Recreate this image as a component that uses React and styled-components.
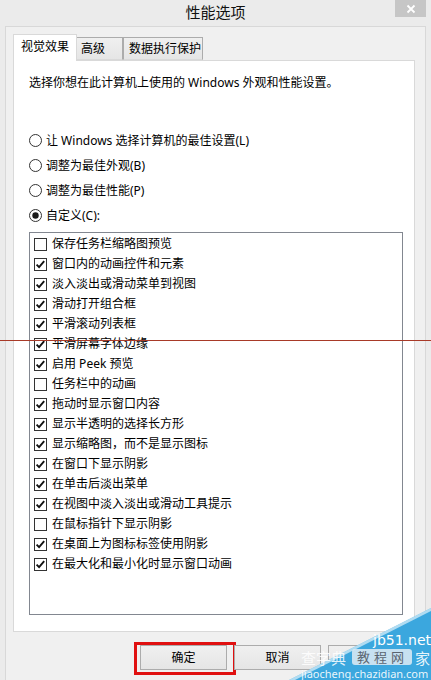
import React from "react";
import styled, { createGlobalStyle } from "styled-components";

const GlobalStyle = createGlobalStyle`
  html, body { margin: 0; padding: 0; background: #ebebeb; }
  body {
    font-family: "Noto Sans", "Noto Sans CJK SC", sans-serif;
    font-size: 12px;
    color: #000;
  }
  * { box-sizing: border-box; }
`;

const FONT = `"Noto Sans", "Noto Sans CJK SC", sans-serif`;

const Window = styled.div`
  position: relative;
  width: 431px;
  height: 680px;
  background: #ebebeb;
  display: flex;
  flex-direction: column;
  overflow: hidden;
  font-family: ${FONT};
`;

const TitleBar = styled.div`
  height: 26px;
  flex: none;
  display: grid;
  grid-template-columns: 1fr auto 1fr;
  align-items: start;
`;

const Title = styled.div`
  grid-column: 2;
  font-size: 15px;
  line-height: 24px;
  color: #111;
  font-family: "Noto Sans CJK SC", sans-serif;
`;

const CloseButton = styled.div`
  grid-column: 3;
  justify-self: end;
  width: 31px;
  height: 17px;
  margin-right: 5px;
  background: #c6c6c6;
  display: flex;
  align-items: center;
  justify-content: center;
`;

const Client = styled.div`
  flex: 1;
  margin: 0 5px;
  background: #f0f0f0;
  border: 1px solid #d8d8d8;
  border-bottom: none;
  padding: 7px 10px 0 7px;
  display: flex;
  flex-direction: column;
`;

const TabStrip = styled.div`
  display: flex;
  align-items: flex-end;
  height: 26px;
  position: relative;
  z-index: 1;
`;

const Tab = styled.div`
  width: ${(p) => p.$w}px;
  height: ${(p) => (p.$active ? 27 : 23)}px;
  margin-bottom: ${(p) => (p.$active ? -1 : 0)}px;
  padding-left: ${(p) => p.$pl}px;
  display: flex;
  align-items: center;
  font-size: 12px;
  line-height: 16px;
  color: #000;
  border: 1px solid ${(p) => (p.$active ? "#d9d9d9" : "#acacac")};
  border-bottom: ${(p) => (p.$active ? "none" : "1px solid #d9d9d9")};
  border-left-width: ${(p) => (p.$noLeft ? 0 : 1)}px;
  background: ${(p) =>
    p.$active ? "#ffffff" : "linear-gradient(#f0f0f0, #e5e5e5)"};
  padding-bottom: ${(p) => (p.$active ? 2 : 0)}px;
`;

const Panel = styled.div`
  height: 572px;
  flex: none;
  background: #fff;
  border: 1px solid #d9d9d9;
  padding: 14px 12px 0 15px;
  display: flex;
  flex-direction: column;
`;

const Description = styled.div`
  font-size: 12px;
  line-height: 16px;
`;

const RadioGroup = styled.div`
  margin-top: 37px;
  display: flex;
  flex-direction: column;
`;

const RadioRow = styled.div`
  height: 25px;
  display: flex;
  align-items: center;
  gap: 4px;
  font-size: 12px;
  line-height: 16px;
`;

const ListBox = styled.div`
  margin-top: 4px;
  height: 383px;
  width: 374px;
  border: 1px solid #828790;
  padding: 1px 4px 0;
  display: flex;
  flex-direction: column;
`;

const CheckRow = styled.div`
  height: 20px;
  display: flex;
  align-items: center;
  gap: 5px;
  font-size: 12px;
  line-height: 16px;
  white-space: nowrap;
`;

const ButtonRow = styled.div`
  margin-top: 13px;
  display: flex;
  justify-content: flex-end;
  gap: 7px;
`;

const ButtonWrap = styled.div`
  position: relative;
`;

const Button = styled.div`
  width: 87px;
  height: 25px;
  border: 1px solid #acacac;
  background: linear-gradient(#f0f0f0, #e5e5e5);
  display: flex;
  align-items: center;
  justify-content: center;
  font-size: 12px;
  line-height: 16px;
  color: ${(p) => (p.$disabled ? "#9a9a9a" : "#000")};
`;

const Highlight = styled.div`
  position: absolute;
  left: -6px;
  top: -3px;
  width: 102px;
  height: 33px;
  border: 3px solid #e01010;
  pointer-events: none;
`;

const RedLine = styled.div`
  position: absolute;
  left: 0;
  top: 340px;
  width: 431px;
  height: 1px;
  background: #a83a28;
`;

const Watermark = styled.div`
  position: absolute;
  right: 0;
  bottom: 0;
  width: 142px;
  height: 72px;
  pointer-events: none;
`;

const WmText = styled.span`
  position: absolute;
  left: ${(p) => p.$x}px;
  top: ${(p) => p.$y}px;
  font-size: ${(p) => p.$size}px;
  line-height: 1;
  color: ${(p) => p.$color || "#fff"};
  font-family: ${(p) => p.$font || FONT};
  white-space: nowrap;
  letter-spacing: ${(p) => p.$ls || 0}px;
`;

const WmBox = styled.span`
  position: absolute;
  left: 63px;
  top: 41px;
  width: 60px;
  height: 16px;
  background: rgba(235, 240, 245, 0.8);
  border-radius: 3px;
`;

function CheckBox({ checked }) {
  return (
    <svg width="13" height="13" viewBox="0 0 13 13">
      <rect x="0.5" y="0.5" width="12" height="12" fill="#fff" stroke="#333" />
      {checked && (
        <polyline
          points="2.6,6.6 5.1,9.2 10.2,3.2"
          fill="none"
          stroke="#111"
          strokeWidth="1.9"
        />
      )}
    </svg>
  );
}

function Radio({ checked }) {
  return (
    <svg width="13" height="13" viewBox="0 0 13 13">
      <circle cx="6.5" cy="6.5" r="6" fill="#fff" stroke="#333" />
      {checked && <circle cx="6.5" cy="6.5" r="3.2" fill="#1a1a1a" />}
    </svg>
  );
}

const radios = [
  { label: "让 Windows 选择计算机的最佳设置(L)", checked: false },
  { label: "调整为最佳外观(B)", checked: false },
  { label: "调整为最佳性能(P)", checked: false },
  { label: "自定义(C):", checked: true },
];

const items = [
  ["保存任务栏缩略图预览", false],
  ["窗口内的动画控件和元素", true],
  ["淡入淡出或滑动菜单到视图", true],
  ["滑动打开组合框", true],
  ["平滑滚动列表框", true],
  ["平滑屏幕字体边缘", true],
  ["启用 Peek 预览", true],
  ["任务栏中的动画", false],
  ["拖动时显示窗口内容", true],
  ["显示半透明的选择长方形", true],
  ["显示缩略图，而不是显示图标", true],
  ["在窗口下显示阴影", true],
  ["在单击后淡出菜单", true],
  ["在视图中淡入淡出或滑动工具提示", true],
  ["在鼠标指针下显示阴影", false],
  ["在桌面上为图标标签使用阴影", true],
  ["在最大化和最小化时显示窗口动画", true],
];

export default function App() {
  return (
    <>
      <GlobalStyle />
      <Window>
        <TitleBar>
          <Title>性能选项</Title>
          <CloseButton>
            <svg width="10" height="10" viewBox="0 0 10 10">
              <path d="M1.5 1.5 L8.5 8.5 M8.5 1.5 L1.5 8.5" stroke="#fff" strokeWidth="1.8" />
            </svg>
          </CloseButton>
        </TitleBar>
        <Client>
          <TabStrip>
            <Tab $active $w={64} $pl={7}>视觉效果</Tab>
            <Tab $w={46} $pl={4} $noLeft>高级</Tab>
            <Tab $w={80} $pl={5}>数据执行保护</Tab>
          </TabStrip>
          <Panel>
            <Description>选择你想在此计算机上使用的 Windows 外观和性能设置。</Description>
            <RadioGroup>
              {radios.map((r) => (
                <RadioRow key={r.label}>
                  <Radio checked={r.checked} />
                  <span>{r.label}</span>
                </RadioRow>
              ))}
            </RadioGroup>
            <ListBox>
              {items.map(([label, checked]) => (
                <CheckRow key={label}>
                  <CheckBox checked={checked} />
                  <span>{label}</span>
                </CheckRow>
              ))}
            </ListBox>
          </Panel>
          <ButtonRow>
            <ButtonWrap>
              <Button>确定</Button>
              <Highlight />
            </ButtonWrap>
            <ButtonWrap>
              <Button>取消</Button>
            </ButtonWrap>
            <ButtonWrap>
              <Button $disabled>应用(A)</Button>
            </ButtonWrap>
          </ButtonRow>
        </Client>
        <RedLine />
        <Watermark>
          <svg width="142" height="72" viewBox="0 0 142 72" style={{ position: "absolute", left: 0, top: 0 }}>
            <polygon points="0,72 142,0 142,72" fill="#3ba7de" />
            <polygon points="0,72 142,0 142,3 6,72" fill="#ffffff" opacity="0.6" />
          </svg>
          <WmText $x={84} $y={25} $size={14} $font={`"DejaVu Sans", sans-serif`}>jb51.net</WmText>
          <WmBox />
          <WmText $x={68} $y={42} $size={13} $color="#5a6470" $ls={4} $font={`"Noto Sans CJK SC", sans-serif`}>教程网</WmText>
          <WmText $x={12} $y={42} $size={15} $color="rgba(255,255,255,0.85)" $font={`"Noto Sans CJK SC", sans-serif`}>查字典</WmText>
          <WmText $x={126} $y={42} $size={15} $color="rgba(255,255,255,0.9)" $font={`"Noto Sans CJK SC", sans-serif`}>家</WmText>
          <WmText $x={12} $y={60} $size={11} $color="rgba(255,255,255,0.9)">jiaocheng.chazidian.com</WmText>
        </Watermark>
      </Window>
    </>
  );
}
